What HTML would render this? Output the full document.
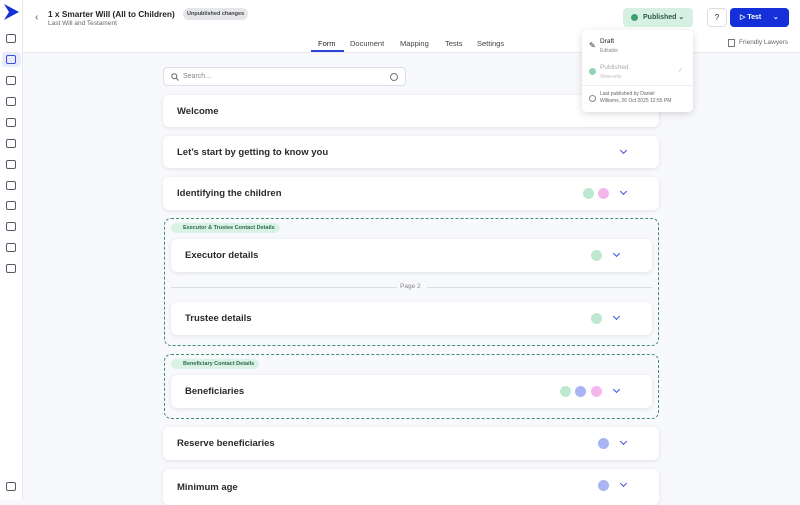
<!DOCTYPE html><html><head><style>
*{box-sizing:border-box;margin:0;padding:0}
body{width:800px;height:500px;overflow:hidden;background:#f8f9fc;font-family:"Liberation Sans",sans-serif;color:#222;position:relative}
.side{position:absolute;left:0;top:0;width:23px;height:500px;background:#fff;border-right:1px solid #e6e8ee}
.si{position:absolute;left:6px;width:10px;height:9px;border:1.3px solid #555a66;border-radius:2px}
.hdr{position:absolute;left:23px;top:0;right:0;height:53px;background:#fff;border-bottom:1px solid #e8eaef}
.abs{position:absolute}
.card{position:absolute;background:#fff;border-radius:6px;box-shadow:0 1px 4px rgba(0,0,0,.1);font-weight:bold;font-size:9.5px;padding-left:14px;display:flex;align-items:center;color:#2a2a2e}
.chev{position:absolute;width:5px;height:5px;border-right:1.3px solid #3b4ee0;border-bottom:1.3px solid #3b4ee0;transform:rotate(45deg)}
.b{position:absolute;width:11px;height:11px;border-radius:50%}
.g{background:#bfe8d2}.p{background:#f3b7ee}.v{background:#a9b4f2}
.grp{position:absolute;border:1.3px dashed #3f8f6a;border-radius:7px}
.tag{position:absolute;background:#d9f2e4;color:#2a6a4c;border-radius:7px;font-size:5.5px;font-weight:bold;padding:2px 5px 2px 12px}
</style></head><body>
<div class="side">
<svg class="abs" style="left:4px;top:4px" width="15" height="16" viewBox="0 0 15 16"><path d="M0 0 L15 8 L0 16 L5 8Z" fill="#1530d8"/></svg>
<div class="si" style="top:34px"></div>
<div class="abs" style="left:2px;top:52px;width:19px;height:15px;background:#e8ecfb;border-radius:3px"></div>
<div class="si" style="top:55px;border-color:#3b4ee0"></div>
<div class="si" style="top:76px"></div><div class="si" style="top:97px"></div><div class="si" style="top:118px"></div><div class="si" style="top:139px"></div><div class="si" style="top:160px"></div><div class="si" style="top:181px"></div><div class="si" style="top:201px"></div><div class="si" style="top:222px"></div><div class="si" style="top:243px"></div><div class="si" style="top:264px"></div><div class="si" style="top:482px"></div>
</div>
<div class="hdr">
<div class="abs" style="left:12px;top:12px;font-size:10px;color:#555">‹</div>
<div class="abs" style="left:25px;top:9px;font-size:8.3px;font-weight:bold;white-space:nowrap">1 x Smarter Will (All to Children)</div>
<div class="abs" style="left:160px;top:8px;background:#e4e6ea;border-radius:6px;font-size:5.5px;font-weight:bold;color:#444;padding:3px 4px">Unpublished changes</div>
<div class="abs" style="left:25px;top:20px;font-size:6.5px;color:#666">Last Will and Testament</div>
<div class="abs" style="left:295px;top:39px;font-size:7.5px">Form</div>
<div class="abs" style="left:288px;top:50px;width:33px;height:2px;background:#2b44d8"></div>
<div class="abs" style="left:327px;top:39px;font-size:7.5px;color:#444">Document</div>
<div class="abs" style="left:377px;top:39px;font-size:7.5px;color:#444">Mapping</div>
<div class="abs" style="left:422px;top:39px;font-size:7.5px;color:#444">Tests</div>
<div class="abs" style="left:454px;top:39px;font-size:7.5px;color:#444">Settings</div>
<div class="abs" style="left:705px;top:39px;width:7px;height:8px;border:1px solid #777"></div>
<div class="abs" style="left:716px;top:39px;font-size:6.5px;color:#666">Friendly Lawyers</div>
<div class="abs" style="left:600px;top:8px;width:70px;height:19px;background:#d6f1e3;border-radius:4px;font-size:7px;font-weight:bold;color:#2b5a43;padding:5px 0 0 20px">Published ⌄</div>
<div class="abs" style="left:608px;top:14px;width:7px;height:7px;border-radius:50%;background:#3f9e6e"></div>
<div class="abs" style="left:684px;top:8px;width:20px;height:19px;border:1px solid #ddd;border-radius:4px;font-size:8px;text-align:center;line-height:17px">?</div>
<div class="abs" style="left:707px;top:8px;width:59px;height:19px;background:#1530d8;border-radius:4px;color:#fff;font-size:7px;font-weight:bold;padding:5px 0 0 10px">▷ Test &nbsp;&nbsp;&nbsp;&nbsp;&nbsp;⌄</div>
</div>
<div class="abs" style="left:163px;top:67px;width:243px;height:19px;background:#fff;border:1px solid #dde0e6;border-radius:4px;font-size:7px;color:#888;padding:5px 0 0 19px">Search...
<svg class="abs" style="left:7px;top:5px" width="8" height="8" viewBox="0 0 8 8"><circle cx="3.3" cy="3.3" r="2.5" fill="none" stroke="#666" stroke-width="1"/><path d="M5.2 5.2L7.5 7.5" stroke="#666"/></svg>
<div class="abs" style="left:226px;top:5px;width:8px;height:8px;border:1px solid #777;border-radius:50%"></div></div>
<div class="card" style="left:163px;top:95px;width:496px;height:32px">Welcome</div>
<div class="card" style="left:163px;top:136px;width:496px;height:32px">Let’s start by getting to know you<div class="chev" style="left:458px;top:12px"></div></div>
<div class="card" style="left:163px;top:177px;width:496px;height:33px">Identifying the children<div class="b g" style="left:420px;top:11px"></div><div class="b p" style="left:435px;top:11px"></div><div class="chev" style="left:458px;top:12px"></div></div>
<div class="grp" style="left:164px;top:218px;width:495px;height:128px"></div>
<div class="tag" style="left:171px;top:223px">Executor &amp; Trustee Contact Details</div>
<div class="card" style="left:171px;top:239px;width:481px;height:33px">Executor details<div class="b g" style="left:420px;top:11px"></div><div class="chev" style="left:443px;top:12px"></div></div>
<div class="abs" style="left:171px;top:287px;width:226px;height:1px;background:#dcdfe5"></div>
<div class="abs" style="left:400px;top:283px;font-size:6.5px;color:#888">Page 2</div>
<div class="abs" style="left:427px;top:287px;width:225px;height:1px;background:#dcdfe5"></div>
<div class="card" style="left:171px;top:302px;width:481px;height:33px">Trustee details<div class="b g" style="left:420px;top:11px"></div><div class="chev" style="left:443px;top:12px"></div></div>
<div class="grp" style="left:164px;top:354px;width:495px;height:65px"></div>
<div class="tag" style="left:171px;top:359px">Beneficiary Contact Details</div>
<div class="card" style="left:171px;top:375px;width:481px;height:33px">Beneficiaries<div class="b g" style="left:389px;top:11px"></div><div class="b v" style="left:404px;top:11px"></div><div class="b p" style="left:420px;top:11px"></div><div class="chev" style="left:443px;top:12px"></div></div>
<div class="card" style="left:163px;top:427px;width:496px;height:33px">Reserve beneficiaries<div class="b v" style="left:435px;top:11px"></div><div class="chev" style="left:458px;top:12px"></div></div>
<div class="card" style="left:163px;top:469px;width:496px;height:36px">Minimum age<div class="b v" style="left:435px;top:11px"></div><div class="chev" style="left:458px;top:12px"></div></div>
<div class="abs" style="left:582px;top:30px;width:111px;height:82px;background:#fff;border-radius:5px;box-shadow:0 2px 8px rgba(0,0,0,.15)">
<div class="abs" style="left:7px;top:11px;font-size:8px">✎</div>
<div class="abs" style="left:18px;top:8px;font-size:6.5px">Draft</div>
<div class="abs" style="left:18px;top:18px;font-size:5px;color:#888">Editable</div>
<div class="abs" style="left:7px;top:38px;width:7px;height:7px;border-radius:50%;background:#8fd3b0"></div>
<div class="abs" style="left:18px;top:34px;font-size:6.5px;color:#aaa">Published</div>
<div class="abs" style="left:18px;top:44px;font-size:5px;color:#bbb">View-only</div>
<div class="abs" style="left:96px;top:37px;font-size:6px;color:#bbb">✓</div>
<div class="abs" style="left:0;top:55px;width:111px;height:1px;background:#eee"></div>
<div class="abs" style="left:7px;top:65px;width:7px;height:7px;border-radius:50%;border:1px solid #888"></div>
<div class="abs" style="left:18px;top:61px;font-size:5px;color:#666;line-height:7px">Last published by Daniel<br>Williams, 26 Oct 2025 12:55 PM</div>
</div>
</body></html>
